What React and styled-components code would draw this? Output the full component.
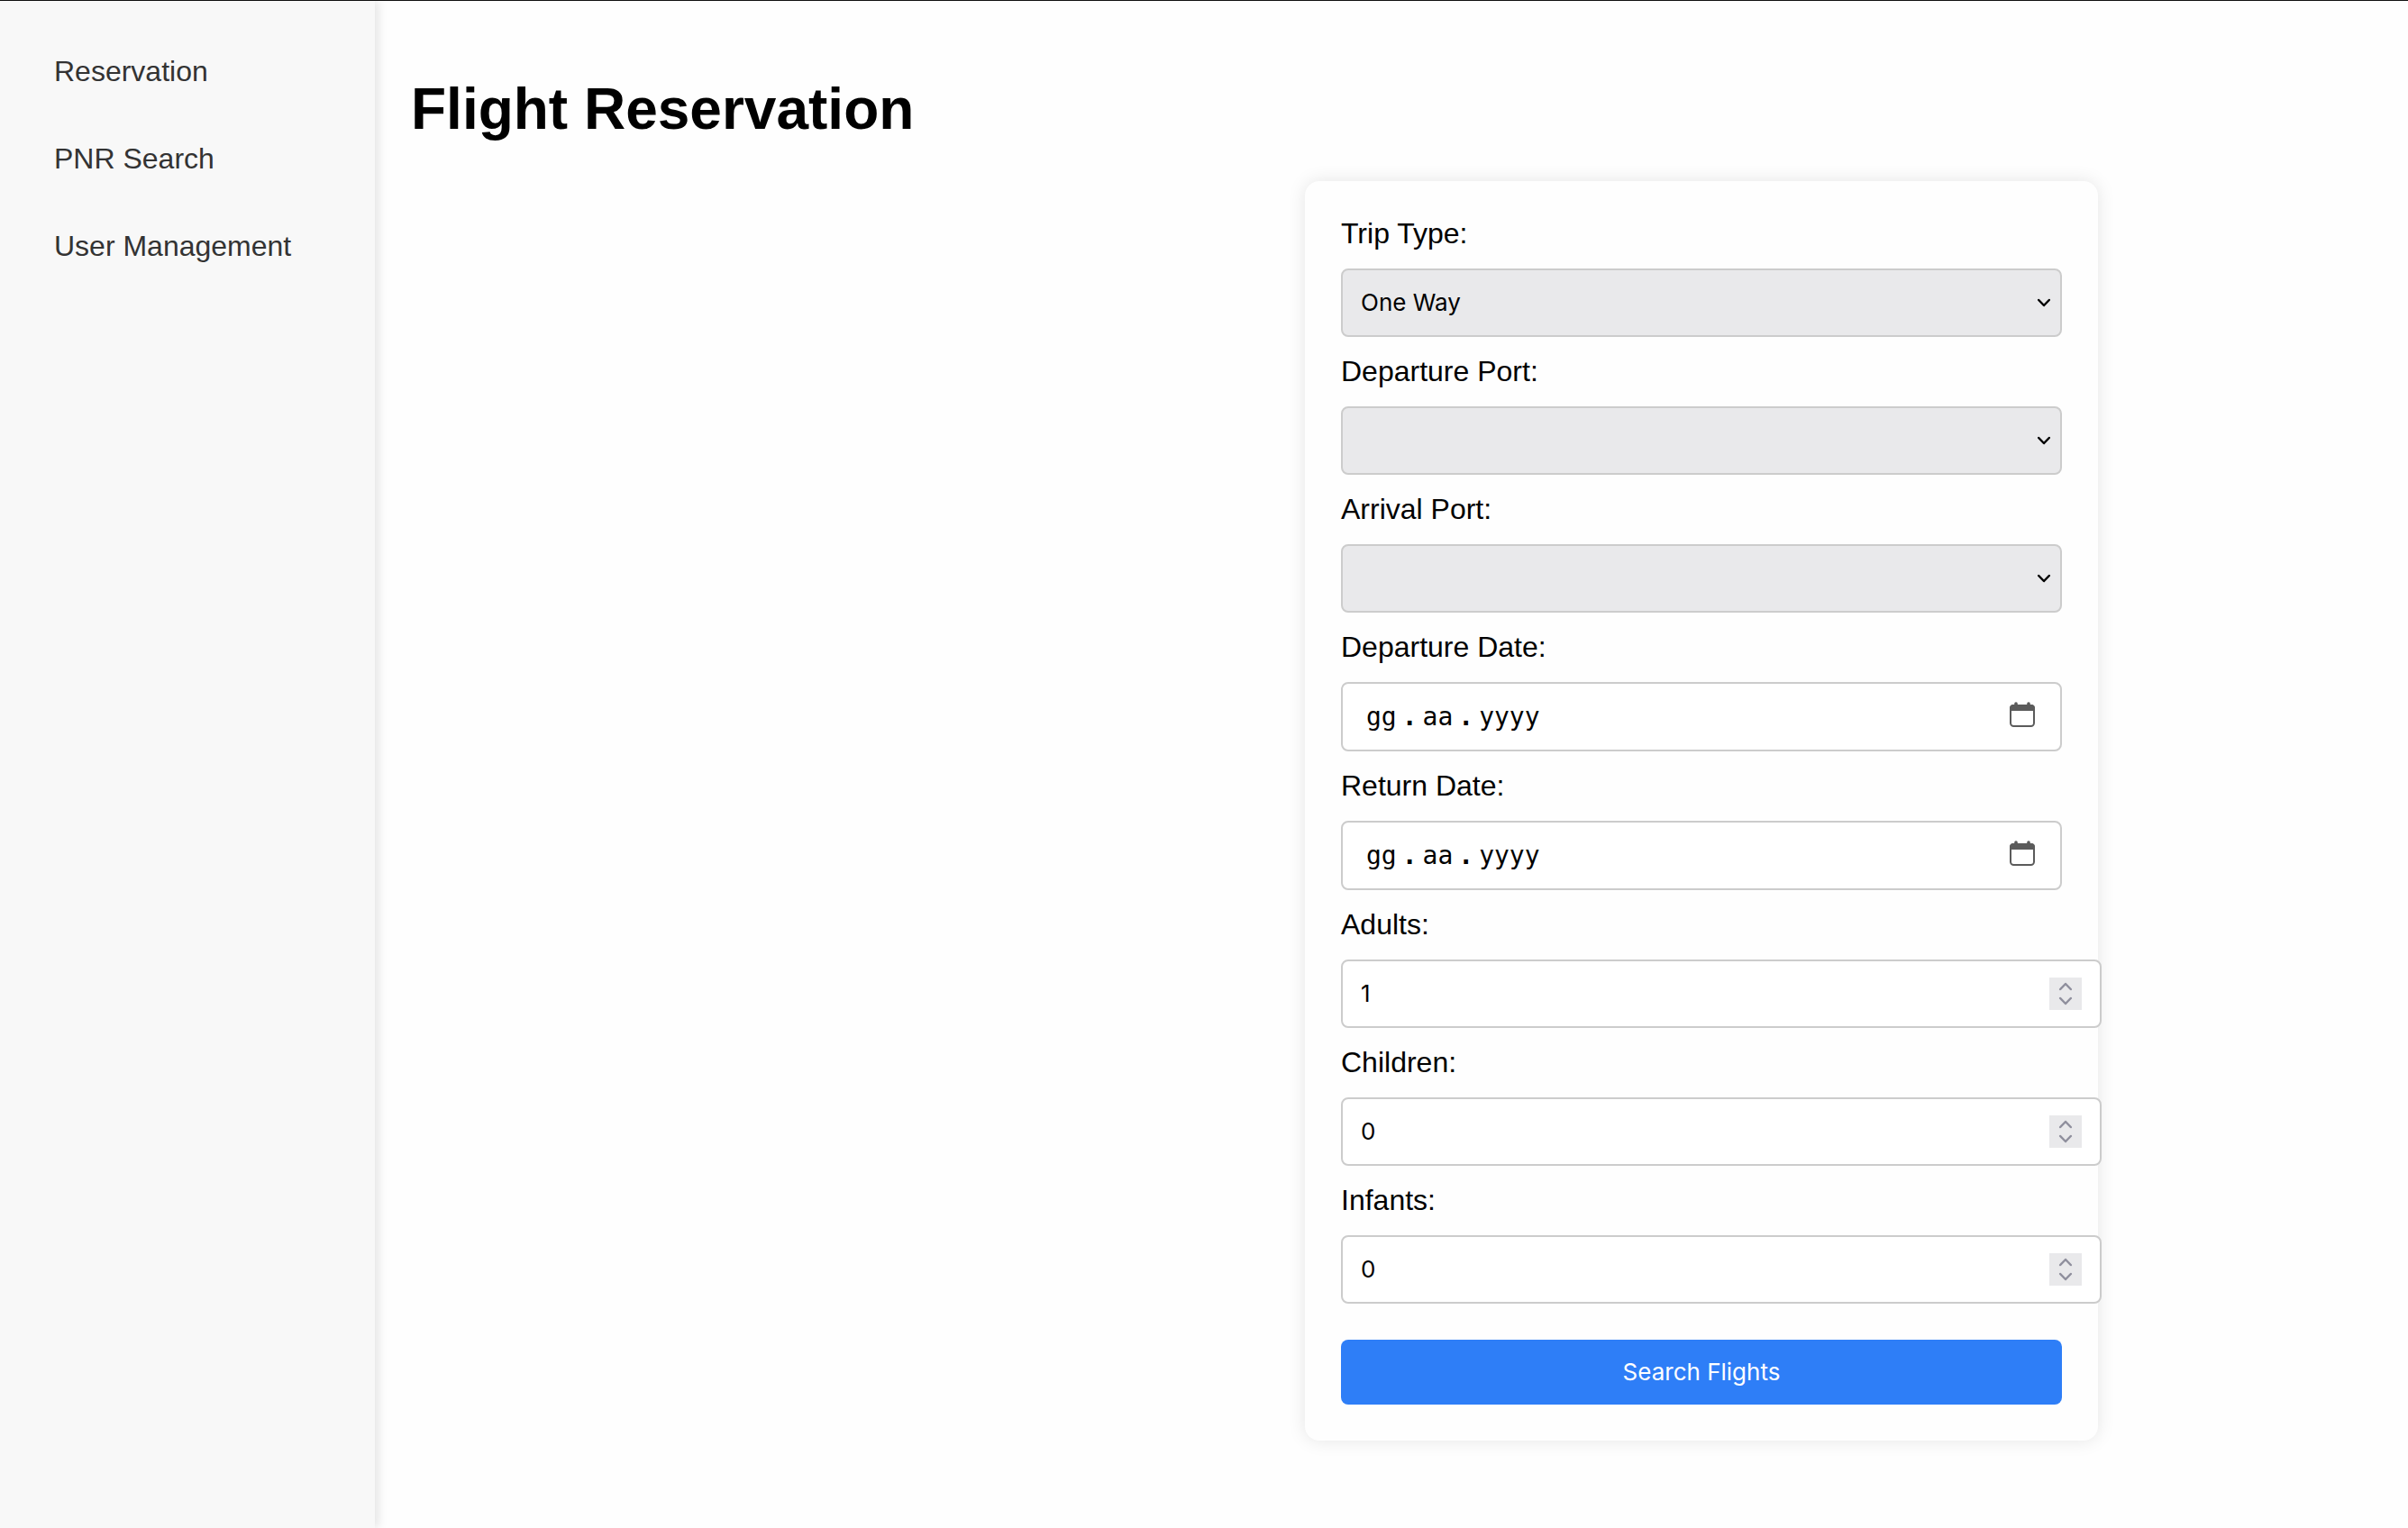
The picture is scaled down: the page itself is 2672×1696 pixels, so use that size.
import React, { useRef, useState } from "react";
import styled, { createGlobalStyle } from "styled-components";

const GlobalStyle = createGlobalStyle`
  *, *::before, *::after { box-sizing: border-box; }
  body {
    margin: 0;
    background: #fefefe;
    color: #000;
    font-family: "Liberation Sans", Arial, sans-serif;
    font-size: 32px;
  }
`;

const uiFont = `
  font-family: Inter, system-ui, sans-serif;
  font-size: 26px;
  line-height: 32px;
`;

const Page = styled.div`
  display: flex;
  min-height: 100vh;
  border-top: 1px solid #111;
`;

const Sidebar = styled.nav`
  flex: 0 0 416px;
  padding: 40px;
  background: #f8f8f8;
  box-shadow: 4px 0 10px rgba(0, 0, 0, 0.1);
`;

const NavList = styled.ul`
  display: flex;
  flex-direction: column;
  gap: 20px;
  margin: 0;
  padding: 0;
  list-style: none;
`;

const NavLink = styled.a`
  display: block;
  padding: 20px;
  line-height: 37px;
  color: #333;
  text-decoration: none;
  white-space: nowrap;
`;

const Content = styled.main`
  flex: 1;
  min-width: 0;
  padding: 40px;
`;

const Title = styled.h1`
  margin: 43px 0;
  font-size: 64px;
  line-height: 74px;
`;

const Card = styled.form`
  display: flex;
  flex-direction: column;
  gap: 20px;
  max-width: 880px;
  margin: 0 304px 0 auto;
  padding: 40px;
  border-radius: 16px;
  background: #fefefe;
  box-shadow: 0 0 20px rgba(0, 0, 0, 0.1);
`;

const Label = styled.label`
  line-height: 37px;
`;

const SelectBox = styled.div`
  display: grid;
  align-items: center;

  > * { grid-area: 1 / 1; }
  > svg {
    justify-self: end;
    margin-right: 12px;
    pointer-events: none;
  }
`;

const Select = styled.select`
  ${uiFont}
  appearance: none;
  width: 100%;
  height: 76px;
  padding: 20px;
  border: 2px solid #ccc;
  border-radius: 8px;
  background: #e9e9eb;
  color: #000;
`;

const DateBox = styled.div`
  display: flex;
  align-items: center;
  padding: 20px 28px 20px 26px;
  border: 2px solid #ccc;
  border-radius: 8px;
  background: #fff;
  font: 28px/33px "DejaVu Sans Mono", monospace;
`;

const DatePart = styled.input`
  width: ${(p) => p.maxLength}ch;
  padding: 0;
  border: 0;
  outline: 0;
  background: none;
  color: #000;
  font: inherit;
  &::placeholder { color: #000; opacity: 1; }
`;

const DateDot = styled.span`
  padding: 0 6px;
  font-weight: bold;
`;

const PickerButton = styled.button`
  display: flex;
  align-self: flex-start;
  margin-left: auto;
  padding: 0;
  border: 0;
  background: none;
  color: #5b5b5b;
`;

const NumberBox = styled.div`
  box-sizing: content-box;
  display: flex;
  align-items: center;
  width: 100%;
  height: 32px;
  padding: 20px;
  border: 2px solid #ccc;
  border-radius: 8px;
  background: #fff;
`;

const NumberInput = styled.input`
  ${uiFont}
  flex: 1;
  min-width: 0;
  padding: 0;
  border: 0;
  outline: 0;
  background: none;
  color: #000;
  appearance: textfield;
  &::-webkit-inner-spin-button { appearance: none; margin: 0; }
`;

const Stepper = styled.div`
  display: flex;
  flex-direction: column;
  width: 36px;
  margin: -2px 0;
  background: #e9e9eb;
`;

const StepButton = styled.button`
  display: flex;
  align-items: center;
  justify-content: center;
  height: 18px;
  padding: ${(p) => (p.$up ? "2px 0 0" : "0 0 2px")};
  border: 0;
  background: none;
  color: #8f8f9d;
`;

const SubmitButton = styled.button`
  ${uiFont}
  margin-top: 20px;
  padding: 20px;
  border: 0;
  border-radius: 8px;
  background: #2e7ef7;
  color: #fff;
`;

function Chevron({ up }) {
  return (
    <svg width="16" height="10" viewBox="0 0 16 10" fill="none" stroke="currentColor"
      strokeWidth="2.5" strokeLinecap="round" strokeLinejoin="round" aria-hidden="true">
      <path d={up ? "M2.2 8 8 2l5.8 6" : "M2.2 2 8 8l5.8-6"} />
    </svg>
  );
}

function CalendarIcon() {
  return (
    <svg width="28" height="28" viewBox="0 0 28 28" aria-hidden="true">
      <rect x="1" y="4" width="26" height="23" rx="3.5" fill="none" stroke="currentColor" strokeWidth="2" />
      <path d="M0 10V7a4 4 0 0 1 4-4h20a4 4 0 0 1 4 4v3z" fill="currentColor" />
      <path d="M7 2v3M21 2v3" stroke="currentColor" strokeWidth="3.6" strokeLinecap="round" />
    </svg>
  );
}

function SelectField({ id, label, options = [] }) {
  return (
    <>
      <Label htmlFor={id}>{label}</Label>
      <SelectBox>
        <Select id={id}>
          {options.map((o) => <option key={o}>{o}</option>)}
        </Select>
        <Chevron />
      </SelectBox>
    </>
  );
}

function DateField({ id, label }) {
  const day = useRef(null);
  return (
    <>
      <Label htmlFor={id}>{label}</Label>
      <DateBox role="group" aria-label={label}>
        <DatePart id={id} ref={day} maxLength={2} placeholder="gg" />
        <DateDot>.</DateDot>
        <DatePart maxLength={2} placeholder="aa" aria-label={`${label} aa`} />
        <DateDot>.</DateDot>
        <DatePart maxLength={4} placeholder="yyyy" aria-label={`${label} yyyy`} />
        <PickerButton type="button" aria-label={label} onClick={() => day.current.focus()}>
          <CalendarIcon />
        </PickerButton>
      </DateBox>
    </>
  );
}

function NumberField({ id, label, initial }) {
  const [value, setValue] = useState(initial);
  return (
    <>
      <Label htmlFor={id}>{label}</Label>
      <NumberBox>
        <NumberInput id={id} type="number" min="0" value={value}
          onChange={(e) => setValue(Number(e.target.value))} />
        <Stepper>
          <StepButton type="button" $up aria-label={`${label} +`} onClick={() => setValue(value + 1)}>
            <Chevron up />
          </StepButton>
          <StepButton type="button" aria-label={`${label} -`} onClick={() => setValue(Math.max(0, value - 1))}>
            <Chevron />
          </StepButton>
        </Stepper>
      </NumberBox>
    </>
  );
}

export default function App() {
  return (
    <>
      <GlobalStyle />
      <Page>
        <Sidebar>
          <NavList>
            {["Reservation", "PNR Search", "User Management"].map((item) => (
              <li key={item}><NavLink href="#">{item}</NavLink></li>
            ))}
          </NavList>
        </Sidebar>
        <Content>
          <Title>Flight Reservation</Title>
          <Card onSubmit={(e) => e.preventDefault()}>
            <SelectField id="trip-type" label="Trip Type:" options={["One Way", "Round Trip"]} />
            <SelectField id="departure-port" label="Departure Port:" />
            <SelectField id="arrival-port" label="Arrival Port:" />
            <DateField id="departure-date" label="Departure Date:" />
            <DateField id="return-date" label="Return Date:" />
            <NumberField id="adults" label="Adults:" initial={1} />
            <NumberField id="children" label="Children:" initial={0} />
            <NumberField id="infants" label="Infants:" initial={0} />
            <SubmitButton type="submit">Search Flights</SubmitButton>
          </Card>
        </Content>
      </Page>
    </>
  );
}
